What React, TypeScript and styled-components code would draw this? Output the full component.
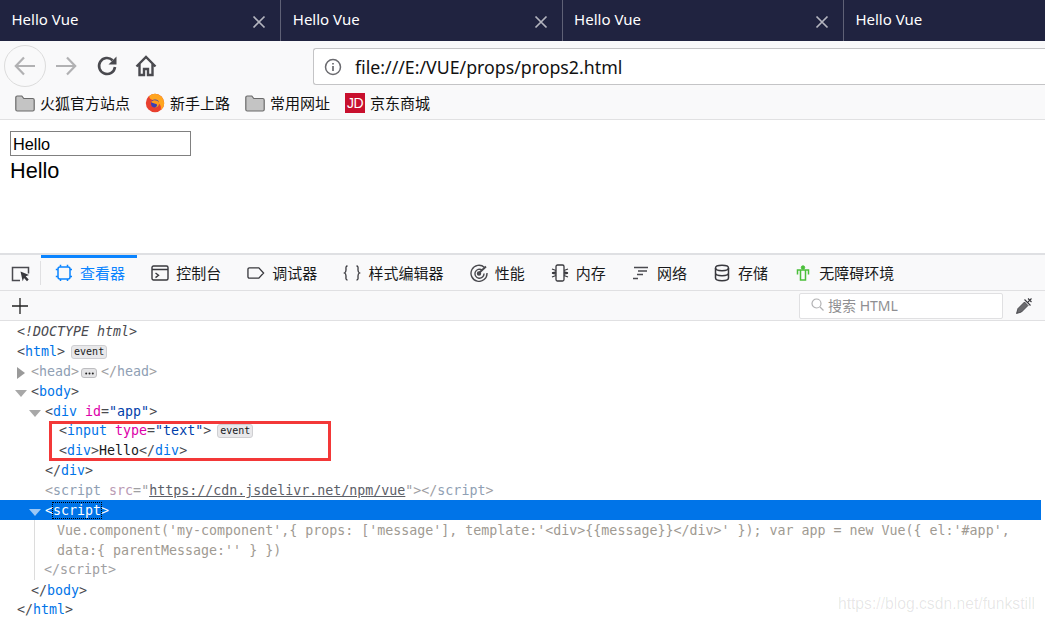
import React from 'react';
import styled, { createGlobalStyle } from 'styled-components';

const CJK = `"Noto Sans", "Noto Sans CJK SC", sans-serif`;
const MONO = `"DejaVu Sans Mono", monospace`;
const SCRIPT_SOURCE = `Vue.component('my-component',{ props: ['message'], template:'<div>{{message}}</div>' }); var app = new Vue({ el:'#app', data:{ parentMessage:'' } })`;

export default function App(): JSX.Element {
  return (
    <Page>
      <GlobalStyle />
      <TabStrip>
        {[0, 1, 2, 3].map((i) => (
          <Tab key={i}>
            <TabTitle>Hello Vue</TabTitle>
            {i < 3 && (
              <svg width='14' height='14' viewBox='0 0 14 14'>
                <path d='M1.5 1.5l11 11M12.5 1.5l-11 11' stroke='#b4b5bf' strokeWidth='1.7' />
              </svg>
            )}
          </Tab>
        ))}
      </TabStrip>

      <NavBar>
        <BackButton>
          <svg width='24' height='24' viewBox='0 0 24 24' fill='none' stroke='#b1b1b3' strokeWidth='2.2'>
            <path d='M22 12H3M11 3.5L2.8 12l8.2 8.5' />
          </svg>
        </BackButton>
        <ForwardIcon width='24' height='24' viewBox='0 0 24 24' fill='none' stroke='#b1b1b3' strokeWidth='2.2'>
          <path d='M2 12h19M13 3.5l8.2 8.5-8.2 8.5' />
        </ForwardIcon>
        <ReloadIcon width='22' height='22' viewBox='0 0 22 22' fill='none'>
          <path d='M16.6 5.2A8 8 0 1 0 19 12' stroke='#4a4a4f' strokeWidth='2.6' />
          <path d='M20.5 1.5v8h-8z' fill='#4a4a4f' />
        </ReloadIcon>
        <HomeIcon width='22' height='22' viewBox='0 0 22 22' fill='none' stroke='#4a4a4f' strokeWidth='2.4'>
          <path d='M1.5 11.5L11 2l9.5 9.5M4.5 9v11h4.5v-6h4v6h4.5V9' />
        </HomeIcon>
        <UrlBar>
          <svg width='18' height='18' viewBox='0 0 18 18' fill='none'>
            <circle cx='9' cy='9' r='7.5' stroke='#6a6a6f' strokeWidth='1.5' />
            <path d='M9 8v5M9 5v1.6' stroke='#6a6a6f' strokeWidth='1.7' />
          </svg>
          <UrlText>file:///E:/VUE/props/props2.html</UrlText>
        </UrlBar>
      </NavBar>

      <BookmarkBar>
        <Bookmark>
          <FolderIcon />
          火狐官方站点
        </Bookmark>
        <Bookmark>
          <svg width='20' height='20' viewBox='0 0 20 20'>
            <circle cx='10' cy='10' r='9.2' fill='#e8402f' />
            <path d='M10 .8a9.2 9.2 0 0 1 9.2 9.2c0 3-1.5 5.6-3.6 7.3 1.2-3.6-.6-7.6-5-8.3-1-.2-1.6-.8-1.3-1.6C6 7 3.5 5 4.5 2.8 6 1.5 8 .8 10 .8z' fill='#ffa51f' />
            <circle cx='10' cy='10.5' r='4' fill='#3a3fb5' />
            <path d='M6 9c2-2.5 6.5-2.2 8 .5 .6 3-1.5 5-4 5 2-.8 2.6-2.5 1.5-3.6C10 10.5 7.5 10.5 6 9z' fill='#ff9c1a' />
          </svg>
          新手上路
        </Bookmark>
        <Bookmark>
          <FolderIcon />
          常用网址
        </Bookmark>
        <Bookmark>
          <JdLogo>JD</JdLogo>
          京东商城
        </Bookmark>
      </BookmarkBar>

      <Content>
        <DemoInput defaultValue='Hello' />
        <DemoText>Hello</DemoText>
      </Content>

      <DevTools>
        <DevTabs>
          <PickerCell>
            <svg width='20' height='18' viewBox='0 0 20 18' fill='none'>
              <path d='M9 15.5H1.5v-13h16v6' stroke='#4a4a4f' strokeWidth='1.5' />
              <path d='M9.5 6.5l8.5 3.5-3.3 1.3 3 3.2-1.7 1.7-3-3.2-1.3 3.3z' fill='#38383d' />
            </svg>
          </PickerCell>
          <DevTab $active>
            <svg width='18' height='18' viewBox='0 0 18 18' fill='none' stroke='#0a84ff' strokeWidth='1.5'>
              <rect x='3' y='3' width='12' height='12' rx='2' />
              <path d='M5.5 .8v2M12.5 .8v2M5.5 15v2M12.5 15v2M.8 5.5h2M.8 12.5h2M15 5.5h2M15 12.5h2' />
            </svg>
            查看器
          </DevTab>
          <DevTab>
            <svg width='18' height='16' viewBox='0 0 18 16' fill='none' stroke='#38383d' strokeWidth='1.4'>
              <rect x='1' y='1' width='16' height='14' rx='1.5' />
              <path d='M1 4.5h16M4.5 8l3 2.3-3 2.3' />
            </svg>
            控制台
          </DevTab>
          <DevTab>
            <svg width='19' height='14' viewBox='0 0 19 14' fill='none' stroke='#38383d' strokeWidth='1.4'>
              <path d='M2.5 1.5h10l5 5.5-5 5.5h-10a1.5 1.5 0 0 1-1.5-1.5V3a1.5 1.5 0 0 1 1.5-1.5z' />
            </svg>
            调试器
          </DevTab>
          <DevTab>
            <svg width='18' height='16' viewBox='0 0 18 16' fill='none' stroke='#38383d' strokeWidth='1.3'>
              <path d='M4.5 1C2.5 1 3 3 3 5s-.3 2.5-1.5 3C2.7 8.5 3 9 3 11s-.5 4 1.5 4M13.5 1c2 0 1.5 2 1.5 4s.3 2.5 1.5 3c-1.2.5-1.500 1-1.500 3s.5 4-1.500 4' />
            </svg>
            样式编辑器
          </DevTab>
          <DevTab>
            <svg width='18' height='18' viewBox='0 0 18 18' fill='none' stroke='#4a4a4f' strokeWidth='1.4'>
              <path d='M14.5 3.5A8 8 0 1 0 17 9M12 6a4.5 4.5 0 1 0 2 3.5' />
              <path d='M9 9l7-6.5' strokeWidth='1.8' />
              <circle cx='9' cy='9.5' r='1.5' fill='#4a4a4f' />
            </svg>
            性能
          </DevTab>
          <DevTab>
            <svg width='18' height='18' viewBox='0 0 18 18' fill='none' stroke='#38383d' strokeWidth='1.3'>
              <rect x='5' y='1' width='8' height='16' rx='1.5' />
              <path d='M1 5l4 1.5M1 9l4-1M1 9l4 1M1 13l4-1.5M17 5l-4 1.5M17 9l-4-1M17 9l-4 1M17 13l-4-1.5' />
            </svg>
            内存
          </DevTab>
          <DevTab>
            <svg width='18' height='14' viewBox='0 0 18 14' fill='none' stroke='#4a4a4f' strokeWidth='1.4'>
              <path d='M2 1.5h14M6 5h9M5 8.5h6M1 12.5h5' />
            </svg>
            网络
          </DevTab>
          <DevTab>
            <svg width='18' height='18' viewBox='0 0 18 18' fill='none' stroke='#38383d' strokeWidth='1.5'>
              <ellipse cx='9' cy='4' rx='6.5' ry='2.7' />
              <path d='M2.5 4v10c0 1.500 3 2.700 6.500 2.700s6.500-1.200 6.500-2.700V4M2.5 9c0 1.500 3 2.700 6.500 2.700s6.500-1.200 6.500-2.700' />
            </svg>
            存储
          </DevTab>
          <DevTab>
            <svg width='18' height='16' viewBox='0 0 18 16' fill='none' stroke='#4bbf3a'>
              <circle cx='9' cy='2.5' r='1.7' fill='#4bbf3a' />
              <path d='M3.5 9.5V5h11v4.500M6.500 5v10h5V5' strokeWidth='1.5' />
            </svg>
            无障碍环境
          </DevTab>
        </DevTabs>

        <MarkupToolbar>
          <svg width='18' height='18' viewBox='0 0 18 18' stroke='#222' strokeWidth='1.3'>
            <path d='M9 1v16M1 9h16' />
          </svg>
          <SearchBox>
            <svg width='13' height='13' viewBox='0 0 13 13' fill='none' stroke='#b1b1b3' strokeWidth='1.2'>
              <circle cx='5.5' cy='5.5' r='4.5' />
              <path d='M9 9l3.5 3.5' />
            </svg>
            搜索 HTML
          </SearchBox>
          <Eyedropper width='18' height='18' viewBox='0 0 18 18' fill='none'>
            <path d='M1.5 16.5l1.5-5 6.5-6.5 3.5 3.5-6.5 6.5z' fill='#6a6a6e' stroke='#38383d' strokeWidth='.8' />
            <path d='M9.5 2.5l6 6M13 1.5l3.5 3.500M16.500 1.500L13 5' stroke='#38383d' strokeWidth='1.1' />
          </Eyedropper>
        </MarkupToolbar>

        <Tree>
          <Row>
            <Doctype>&lt;!DOCTYPE html&gt;</Doctype>
          </Row>
          <Row>
            <Punct>&lt;</Punct>
            <Tag>html</Tag>
            <Punct>&gt;</Punct>
            <EventBadge>event</EventBadge>
          </Row>
          <Row $depth={1} $dim>
            <Twisty $closed />
            <Punct>&lt;</Punct>
            <Tag>head</Tag>
            <Punct>&gt;</Punct>
            <MoreBadge>
              <svg width='9' height='3' viewBox='0 0 9 3' fill='#222'>
                <circle cx='1.2' cy='1.5' r='1' />
                <circle cx='4.5' cy='1.5' r='1' />
                <circle cx='7.8' cy='1.5' r='1' />
              </svg>
            </MoreBadge>
            <Punct>&lt;/</Punct>
            <Tag>head</Tag>
            <Punct>&gt;</Punct>
          </Row>
          <Row $depth={1}>
            <Twisty />
            <Punct>&lt;</Punct>
            <Tag>body</Tag>
            <Punct>&gt;</Punct>
          </Row>
          <Row $depth={2}>
            <Twisty />
            <Punct>&lt;</Punct>
            <Tag>div</Tag> <AttrName>id</AttrName>
            <Punct>=</Punct>
            <AttrValue>"app"</AttrValue>
            <Punct>&gt;</Punct>
          </Row>
          <Highlighted>
            <Row $depth={3}>
              <Punct>&lt;</Punct>
              <Tag>input</Tag> <AttrName>type</AttrName>
              <Punct>=</Punct>
              <AttrValue>"text"</AttrValue>
              <Punct>&gt;</Punct>
              <EventBadge>event</EventBadge>
            </Row>
            <Row $depth={3}>
              <Punct>&lt;</Punct>
              <Tag>div</Tag>
              <Punct>&gt;</Punct>
              <Plain>Hello</Plain>
              <Punct>&lt;/</Punct>
              <Tag>div</Tag>
              <Punct>&gt;</Punct>
            </Row>
          </Highlighted>
          <Row $depth={2}>
            <Punct>&lt;/</Punct>
            <Tag>div</Tag>
            <Punct>&gt;</Punct>
          </Row>
          <Row $depth={2} $dim>
            <Punct>&lt;</Punct>
            <Tag>script</Tag> <AttrName>src</AttrName>
            <Punct>=</Punct>
            <Punct>"</Punct>
            <LinkValue>https://cdn.jsdelivr.net/npm/vue</LinkValue>
            <Punct>"&gt;&lt;/</Punct>
            <Tag>script</Tag>
            <Punct>&gt;</Punct>
          </Row>
          <SelectedRow>
            <Twisty $light />
            &lt;<Focused>script</Focused>&gt;
          </SelectedRow>
          <ScriptBody>
            <ScriptText>{SCRIPT_SOURCE}</ScriptText>
            <ScriptClose>&lt;/script&gt;</ScriptClose>
          </ScriptBody>
          <Row $depth={1}>
            <Punct>&lt;/</Punct>
            <Tag>body</Tag>
            <Punct>&gt;</Punct>
          </Row>
          <LastRow>
            <Punct>&lt;/</Punct>
            <Tag>html</Tag>
            <Punct>&gt;</Punct>
          </LastRow>
        </Tree>
        <Watermark>https://blog.csdn.net/funkstill</Watermark>
      </DevTools>
    </Page>
  );
}

function FolderIcon(): JSX.Element {
  return (
    <svg width='20' height='18' viewBox='0 0 20 18'>
      <path d='M.8 3.5A1.500 1.500 0 0 1 2.300 2h4.500l2 2.500h8.900a1.500 1.500 0 0 1 1.500 1.500v9.500a1.500 1.500 0 0 1-1.500 1.500H2.300a1.500 1.500 0 0 1-1.500-1.500z' fill='#c4c4c4' stroke='#6a6a6a' strokeWidth='1.2' />
    </svg>
  );
}

// --------------- Style ---------------
const GlobalStyle = createGlobalStyle`
  html, body {
    margin: 0;
    height: 622px;
    overflow: hidden;
    background: #fff;
  }
`;
const Page = styled.div`
  width: 1045px;
  height: 622px;
  overflow: hidden;
  display: flex;
  flex-direction: column;
  font-family: ${CJK};
`;
const TabStrip = styled.div`
  height: 41px;
  flex: none;
  display: flex;
  background: #202340;
`;
const Tab = styled.div`
  width: 281.3px;
  flex: none;
  box-sizing: border-box;
  display: flex;
  align-items: center;
  justify-content: space-between;
  padding: 0 14px 0 11.5px;
  border-right: 1px solid #5f6176;
  svg {
    margin-top: 3px;
  }
`;
const TabTitle = styled.span`
  color: #fff;
  font-size: 15px;
  margin-bottom: 3px;
`;
const NavBar = styled.div`
  height: 49px;
  flex: none;
  display: flex;
  align-items: flex-start;
  background: #f9f9fa;
  padding: 4px 0 0 4px;
  box-sizing: border-box;
`;
const BackButton = styled.div`
  width: 42px;
  height: 42px;
  box-sizing: border-box;
  border: 1px solid #dcdcdc;
  border-radius: 50%;
  display: flex;
  align-items: center;
  justify-content: center;
`;
const ForwardIcon = styled.svg`
  margin: 9px 0 0 8px;
`;
const ReloadIcon = styled.svg`
  margin: 10px 0 0 18px;
`;
const HomeIcon = styled.svg`
  margin: 10px 0 0 17px;
`;
const UrlBar = styled.div`
  margin: 3px 0 0 156px;
  flex: 1;
  height: 37px;
  box-sizing: border-box;
  background: #fff;
  border: 1px solid #c4c4c6;
  border-right: none;
  border-radius: 3px 0 0 3px;
  display: flex;
  align-items: center;
  padding-left: 10px;
  gap: 13px;
`;
const UrlText = styled.span`
  font-size: 17.75px;
  color: #111;
`;
const BookmarkBar = styled.div`
  height: 30px;
  flex: none;
  box-sizing: border-box;
  display: flex;
  align-items: center;
  gap: 15px;
  padding: 0 0 4px 15px;
  background: #f9f9fa;
  border-bottom: 1px solid #e1e1e2;
`;
const Bookmark = styled.div`
  display: flex;
  align-items: center;
  gap: 5px;
  font-size: 15px;
  color: #111;
`;
const JdLogo = styled.span`
  width: 20px;
  height: 20px;
  background: #c8102e;
  color: #fff;
  font: 14px/20px 'Liberation Sans', sans-serif;
  text-align: center;
  letter-spacing: -0.5px;
`;
const Content = styled.div`
  height: 133px;
  flex: none;
  box-sizing: border-box;
  padding: 11px 0 0 10px;
`;
const DemoInput = styled.input`
  display: block;
  width: 181px;
  height: 25px;
  box-sizing: border-box;
  border: 1px solid #808080;
  padding: 2px 2px 0;
  margin: 0;
  font: 16.3px 'Liberation Sans', sans-serif;
  color: #000;
  outline: none;
`;
const DemoText = styled.div`
  font: 21.7px/30px 'Liberation Sans', sans-serif;
  color: #000;
`;
const DevTools = styled.div`
  position: relative;
  flex: 1;
  display: flex;
  flex-direction: column;
  border-top: 2px solid #dfe0e3;
  min-height: 0;
`;
const DevTabs = styled.div`
  height: 36px;
  flex: none;
  box-sizing: border-box;
  display: flex;
  background: #f9f9fa;
  border-bottom: 1px solid #e0e0e2;
`;
const PickerCell = styled.div`
  width: 41px;
  box-sizing: border-box;
  display: flex;
  align-items: center;
  justify-content: center;
  padding-top: 2px;
  position: relative;
  &::after {
    content: '';
    position: absolute;
    right: 0;
    top: 6px;
    bottom: 5px;
    width: 1px;
    background: #e0e0e2;
  }
`;
const DevTab = styled.div<{ $active?: boolean }>`
  display: flex;
  align-items: center;
  gap: 7px;
  padding: 0 12.15px 3px 14px;
  font-size: 15px;
  color: ${(p) => (p.$active ? '#0a84ff' : '#18191a')};
  border-top: 3px solid ${(p) => (p.$active ? '#0a84ff' : 'transparent')};
  svg {
    width: 18px;
    flex: none;
  }
`;
const MarkupToolbar = styled.div`
  height: 30px;
  flex: none;
  box-sizing: border-box;
  display: flex;
  align-items: center;
  padding: 0 12px 0 11px;
  background: #f9f9fa;
  border-bottom: 1px solid #e0e0e2;
`;
const SearchBox = styled.div`
  margin-left: auto;
  width: 204px;
  height: 26px;
  box-sizing: border-box;
  display: flex;
  align-items: center;
  gap: 4px;
  padding: 0 0 2px 11px;
  background: #fff;
  border: 1px solid #e0e0e2;
  border-radius: 2px;
  font-size: 14px;
  color: #8f8f92;
`;
const Eyedropper = styled.svg`
  margin-left: 12px;
`;
const Punct = styled.span`
  color: #4a4a4f;
`;
const Tag = styled.span`
  color: #0074e8;
`;
const AttrName = styled.span`
  color: #dd00a9;
`;
const AttrValue = styled.span`
  color: #003eaa;
`;
const LinkValue = styled.span`
  color: #003eaa;
  text-decoration: underline;
`;
const Plain = styled.span`
  color: #18191a;
`;
const Doctype = styled.span`
  font-style: italic;
  color: #4a4a4f;
`;
const Tree = styled.div`
  flex: 1;
  font-family: ${MONO};
  font-size: 13.3px;
  color: #4a4a4f;
  margin-right: 4px;
`;
const Row = styled.div<{ $depth?: number; $dim?: boolean }>`
  height: 19.9px;
  line-height: 21.9px;
  white-space: pre;
  padding-left: ${(p) => 17 + (p.$depth || 0) * 14}px;
  ${(p) =>
    p.$dim &&
    `
    ${Punct} { color: #a0a0a3; }
    ${Tag} { color: #8fa0b4; }
    ${AttrName} { color: #b99ab4; }
    ${LinkValue} { color: #5c6068; }
  `}
`;
const LastRow = styled(Row)`
  margin-top: -1px;
`;
const Twisty = styled.span<{ $closed?: boolean; $light?: boolean }>`
  display: inline-block;
  vertical-align: -1px;
  height: 0;
  box-sizing: border-box;
  ${(p) =>
    p.$closed
      ? `border-left: 8px solid #9a9a9a; border-top: 6px solid transparent; border-bottom: 6px solid transparent; width: 8px; margin: 0 6px 0 -14px; vertical-align: -3px;`
      : `border-top: 7px solid ${p.$light ? '#9cc7f5' : '#a8a8a8'}; border-left: 6px solid transparent; border-right: 6px solid transparent; width: 12px; margin: 0 4px 0 -16px;`}
`;
const EventBadge = styled.span`
  display: inline-block;
  vertical-align: 1px;
  margin-left: 6px;
  height: 14px;
  line-height: 12px;
  padding: 0 2px;
  box-sizing: border-box;
  font-size: 10px;
  color: #18191a;
  background: #e8e8ea;
  border: 1px solid #cfcfd2;
  border-radius: 3px;
`;
const MoreBadge = styled.span`
  display: inline-flex;
  vertical-align: 1px;
  margin: 0 4px 0 2px;
  width: 16px;
  height: 10px;
  align-items: center;
  justify-content: center;
  box-sizing: border-box;
  background: #e4e4e6;
  border: 1px solid #bdbdc0;
  border-radius: 3px;
`;
const Highlighted = styled.div`
  position: relative;
  &::after {
    content: '';
    position: absolute;
    left: 49px;
    top: 1px;
    width: 282px;
    height: 40px;
    box-sizing: border-box;
    border: 3px solid #f33838;
  }
`;
const SelectedRow = styled(Row).attrs({ $depth: 2 })`
  background: #0074e8;
  color: #fff;
`;
const Focused = styled.span`
  outline: 1px dotted #000;
`;
const ScriptBody = styled.div`
  margin-left: 34px;
  padding: 1px 0 0 9px;
  border-left: 1px solid #dcdcdc;
  width: 990px;
  height: 60px;
  box-sizing: border-box;
`;
const ScriptText = styled.div`
  padding-left: 13px;
  line-height: 19.7px;
  width: 965px;
  color: #a09a92;
`;
const ScriptClose = styled.div`
  line-height: 19.7px;
  color: #a0a0a3;
`;
const Watermark = styled.div`
  position: absolute;
  right: 10px;
  bottom: 9px;
  font: 15.7px 'Liberation Sans', sans-serif;
  color: rgba(0, 0, 0, 0.1);
`;
